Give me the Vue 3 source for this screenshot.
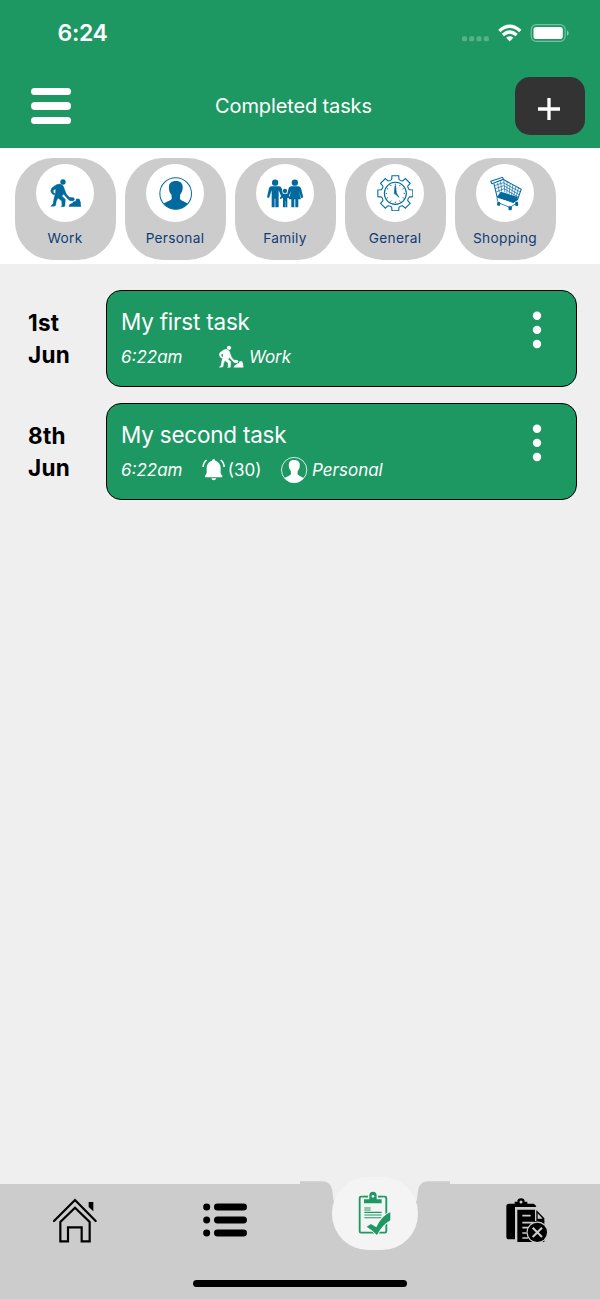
<script setup>
import { h } from 'vue'

const rad = (deg) => ((deg - 90) * Math.PI) / 180
const at = (r, deg) => `${(512 + r * Math.cos(rad(deg))).toFixed(1)} ${(135 + r * Math.sin(rad(deg))).toFixed(1)}`
const gear =
  Array.from({ length: 8 }, (_, k) => {
    const a = k * 45
    return `${k ? 'L' : 'M'}${at(43, a - 15)}L${at(47, a - 13)}L${at(53.5, a - 11)}L${at(53.5, a + 11)}L${at(47, a + 13)}L${at(43, a + 15)}Q${at(40, a + 22.5)} ${at(43, a + 30)}`
  }).join('') + 'Z'
const ticks = Array.from({ length: 12 }, (_, k) => `M${at(25, k * 30)}L${at(29, k * 30)}`).join('')

const icons = {
  work: {
    box: '145 85 105 105',
    body: [
      h('circle', { cx: 190, cy: 103, r: 8 }),
      h('path', { d: 'M156 121L170 111Q180 106 188 112Q193 117 195 126L200 139L209 149L222 150L225 155L220 160L211 159L204 153L191 139L187 146L197 155L196 173L194 177L184 177L187 173L186 160L175 151L170 161L168 173L164 176L153 176L160 169L163 152L167 138L168 124L161 128L161 134L167 139L164 142L157 138L153 130Z', stroke: 'currentColor', 'stroke-width': 1 }),
      h('path', { d: 'M207 177L210 170L219 165L222 161L227 161L230 153L239 153L243 164L244 177Z' })
    ]
  },
  personal: {
    box: '474 83 104 104',
    body: [
      h('circle', { cx: 526.5, cy: 135, r: 47, fill: 'none', stroke: 'currentColor', 'stroke-width': 3 }),
      h('path', { d: 'M527 98C544 98 549 109 547 120C548 129 542 134 540 139L539 149C541 157 553 158 562 165A46 46 0 0 1 491 165C500 158 513 157 515 149L514 139C511 134 506 129 507 120C505 108 511 98 527 98Z' })
    ]
  },
  family: {
    box: '125 83 115 105',
    body: [
      h('circle', { cx: 152.5, cy: 103, r: 9.5 }),
      h('circle', { cx: 211.5, cy: 103, r: 9.5 }),
      h('circle', { cx: 182, cy: 128, r: 6.5 }),
      h('path', { d: 'M141 114H164Q170 114 172 120L178 146L173 150L163 126V177H153V151H151V177H142V126L134 149L128 147L134 120Q136 114 141 114Z' }),
      h('path', { d: 'M201 114H222Q228 114 230 120L237 147L231 150L224 128L230 153H222V177H213V153H210V177H201V153H194L200 128L191 150L186 147L193 120Q195 114 201 114Z' }),
      h('path', { d: 'M177 136H188Q192 137 194 142L199 149L196 153L189 146V177H183V159H182V177H176V146L169 153L166 150L171 142Q173 137 177 136Z' })
    ]
  },
  general: {
    box: '457 80 110 110',
    body: [
      h('path', { d: gear, fill: 'none', stroke: 'currentColor', 'stroke-width': 3.2 }),
      h('circle', { cx: 512, cy: 135, r: 33, fill: 'none', stroke: 'currentColor', 'stroke-width': 3.2 }),
      h('path', { d: ticks, stroke: 'currentColor', 'stroke-width': 2.8 }),
      h('path', { d: 'M511 112L509 135A3.5 3.5 0 0 0 513 138L523 147L515 134L513 112Z', stroke: 'currentColor', 'stroke-width': 1.8 })
    ]
  },
  shopping: {
    box: '266 80 102 110',
    body: [
      h('path', { d: 'M273 99L308 87L311 93L276 106Z', fill: 'none', stroke: 'currentColor', 'stroke-width': 3.2 }),
      h('path', { d: 'M282 105L292 146L340 161L353 154L364 123L312 94', fill: 'none', stroke: 'currentColor', 'stroke-width': 3.2 }),
      h('path', { d: 'M284 112L310 103L361 131M286 121L312 112L358 139M289 131L313 121L356 147M293 103L299 133M302 99L306 130M312 96L315 132M322 100L321 134M331 105L328 138M339 110L335 142M348 115L341 146M356 119L348 148', fill: 'none', stroke: 'currentColor', 'stroke-width': 2 }),
      h('path', { d: 'M291 146L303 130L353 146L354 154L340 164Z' }),
      h('path', { d: 'M291 148L295 163L330 177L352 164', fill: 'none', stroke: 'currentColor', 'stroke-width': 2.4 }),
      h('rect', { x: 292, y: 161, width: 9, height: 11, rx: 3 }),
      h('rect', { x: 326, y: 174, width: 10, height: 12, rx: 3 }),
      h('rect', { x: 346, y: 160, width: 9, height: 13, rx: 3 })
    ]
  },
  bell: {
    box: '305 190 70 70',
    body: [
      h('path', { d: 'M340 194A4.5 4.500 0 0 1 345 198C355 201 361 209 361 220V234Q361 239 366 243V248H314V243Q319 239 319 234V220C319 209 325 201 335 198A4.500 4.500 0 0 1 340 194Z' }),
      h('path', { d: 'M333 251H348Q346 257 340 257Q335 257 333 251Z' }),
      h('path', { d: 'M308.500 217Q309 203 319 196.500M371.500 217Q371 203 361 196.500', fill: 'none', stroke: 'currentColor', 'stroke-width': 4.500 })
    ]
  }
}

const Icon = (props) =>
  h('svg', { viewBox: icons[props.name].box, fill: 'currentColor', 'aria-hidden': 'true' }, icons[props.name].body)
Icon.props = ['name']

const categories = [
  { icon: 'work', label: 'Work' },
  { icon: 'personal', label: 'Personal' },
  { icon: 'family', label: 'Family' },
  { icon: 'general', label: 'General' },
  { icon: 'shopping', label: 'Shopping' }
]

const tasks = [
  { day: '1st', month: 'Jun', title: 'My first task', time: '6:22am', icon: 'work', category: 'Work' },
  { day: '8th', month: 'Jun', title: 'My second task', time: '6:22am', reminder: '(30)', icon: 'personal', category: 'Personal' }
]
</script>

<template>
  <div class="screen">
    <header class="header">
      <div class="status">
        <span class="clock">6:24</span>
        <svg class="indicators" viewBox="0 0 108 20">
          <g fill="#fff" fill-opacity=".25">
            <rect x="1" y="12.3" width="5" height="5" rx="1.5" />
            <rect x="8.2" y="12.3" width="5" height="5" rx="1.5" />
            <rect x="15.5" y="12.3" width="5" height="5" rx="1.5" />
            <rect x="22.8" y="12.3" width="5" height="5" rx="1.5" />
          </g>
          <g fill="none" stroke="#fff" stroke-width="3.3">
            <path d="M38.3 6.9Q48.7-2.4 59.3 6.9" />
            <path d="M41.9 11Q48.7 5 55.6 11" />
          </g>
          <path d="M45.2 13.7Q48.7 11 52.300 13.7L48.7 17.6Z" fill="#fff" />
          <rect x="70.2" y=".7" width="34" height="16.6" rx="5" fill="none" stroke="#fff" stroke-opacity=".4" stroke-width="1.2" />
          <rect x="72.5" y="3" width="29.300" height="12" rx="2.8" fill="#fff" />
          <path d="M106 6.2Q109.500 9 106 12Z" fill="#fff" fill-opacity=".5" />
        </svg>
      </div>
      <div class="toolbar">
        <button class="menu" aria-label="Menu"><i></i><i></i><i></i></button>
        <h1>Completed tasks</h1>
        <button class="add" aria-label="Add">
          <svg viewBox="0 0 22 22"><path d="M11 0V22M0 11H22" stroke="#fff" stroke-width="3.300" /></svg>
        </button>
      </div>
    </header>

    <nav class="categories">
      <div v-for="c in categories" :key="c.label" class="category">
        <span class="disc"><Icon :name="c.icon" :class="['glyph', c.icon]" /></span>
        <span class="label">{{ c.label }}</span>
      </div>
    </nav>

    <main class="tasks">
      <section v-for="t in tasks" :key="t.title" class="row">
        <div class="date">{{ t.day }}<br />{{ t.month }}</div>
        <article class="card">
          <div class="info">
            <h2>{{ t.title }}</h2>
            <div class="meta">
              <em class="time">{{ t.time }}</em>
              <span v-if="t.reminder" class="reminder"><Icon name="bell" class="bell" />{{ t.reminder }}</span>
              <span class="kind" :class="t.icon"><Icon :name="t.icon" class="small" /><em>{{ t.category }}</em></span>
            </div>
          </div>
          <svg class="more" viewBox="0 0 10 38" fill="#fff">
            <circle cx="5" cy="4.800" r="4.200" />
            <circle cx="5" cy="18.900" r="4.200" />
            <circle cx="5" cy="33" r="4.200" />
          </svg>
        </article>
      </section>
    </main>

    <footer class="tabs">
      <a class="tab">
        <svg class="home" viewBox="160 84 132 134" fill="none" stroke="#000" stroke-width="6.5" stroke-linecap="round">
          <path d="M163 153L226 90L288 153" />
          <path d="M182 214V156L226 113L270 156V214H246V172H205V214Z" stroke-linecap="butt" />
          <path d="M267 96H281V124L267 111Z" fill="#000" stroke="none" />
        </svg>
      </a>
      <a class="tab">
        <svg class="list" viewBox="609 100 133 102">
          <circle cx="620" cy="112" r="10.5" /><rect x="642" y="101.500" width="99" height="21" rx="10.500" />
          <circle cx="620" cy="151" r="10.5" /><rect x="642" y="140.500" width="99" height="21" rx="10.500" />
          <circle cx="620" cy="190" r="10.5" /><rect x="642" y="179.500" width="99" height="21" rx="10.500" />
        </svg>
      </a>
      <a class="tab active">
        <svg class="notch" viewBox="30 33 450 69">
          <path d="M100 33H410V69L380 93H131L100 69Z" fill="#efefef" />
          <path d="M30 34H94C113 34 123 44 126 58L131 93L110 102H30ZM480 34H417C398 34 388 44 385 58L380 93L400 102H480Z" fill="#ccc" />
        </svg>
        <span class="bubble">
          <svg class="done" viewBox="204 62 100 134">
            <rect x="209" y="79" width="80" height="108" rx="4" fill="none" stroke="#1e9862" stroke-width="5.500" />
            <path d="M217 75H281V102H217Z" fill="#f4f4f4" />
            <path d="M222 87H238V76A11 12 0 0 1 260 76V87H275V99H222Z" fill="#1e9862" />
            <path d="M217 79H234M264 79H281" stroke="#1e9862" stroke-width="5" />
            <circle cx="249" cy="78" r="4" fill="#f4f4f4" />
            <path d="M223 113H242M223 119H242M223 126H275M223 134H275M223 142H275" stroke="#1e9862" stroke-width="3.200" />
            <path d="M230 169L243 161L259 171Q276 135 301 126V150Q275 165 261 194Q248 179 230 169Z" fill="#1e9862" stroke="#f4f4f4" stroke-width="6" paint-order="stroke" />
          </svg>
        </span>
      </a>
      <a class="tab">
        <svg class="overdue" viewBox="647 84 126 134">
          <path d="M673 101V95H681A11 10 0 0 1 703 95H711V101H730Q736 103 738 111H674V208H656Q648 208 648 200V109Q648 101 656 101Z" />
          <circle cx="692" cy="96" r="4.500" fill="#ccc" />
          <path d="M681 119H734V153H762V216H681Z" />
          <path d="M738 120L762 145V155H738ZM742 130V146H757Z" fill-rule="evenodd" />
          <path d="M696 137H721M696 158H730M696 173H713M696 189H709M696 204H713" stroke="#ccc" stroke-width="5" />
          <circle cx="741" cy="187" r="29" stroke="#ccc" stroke-width="7" paint-order="stroke" />
          <path d="M727 173L755 201M755 173L727 201" stroke="#ccc" stroke-width="6" />
        </svg>
      </a>
      <div class="indicator"></div>
    </footer>
  </div>
</template>

<style>
body {
  margin: 0;
}
</style>

<style scoped>
.screen {
  display: flex;
  flex-direction: column;
  width: 600px;
  height: 1299px;
  overflow: hidden;
  background: #efefef;
  font-family: Inter, "Liberation Sans", sans-serif;
}
svg {
  display: block;
  flex: none;
}
button {
  border: 0;
  padding: 0;
  background: none;
}
.header {
  box-sizing: border-box;
  height: 148px;
  color: #fff;
  background: #1e9862;
}
.status {
  display: flex;
  align-items: center;
  justify-content: space-between;
  height: 66px;
  padding: 0 31px 0 57.500px;
}
.clock {
  font-size: 23px;
  font-weight: 600;
  letter-spacing: -0.3px;
}
.indicators {
  width: 108px;
  height: 20px;
  margin-top: 2px;
}
.toolbar {
  display: grid;
  grid-template-columns: 72px 1fr 85px;
  align-items: center;
  height: 58px;
  margin-top: 11px;
  padding: 0 15px 0 15px;
}
.menu {
  display: flex;
  flex-direction: column;
  gap: 7px;
  width: 40px;
  margin-left: 16px;
}
.menu i {
  height: 7.5px;
  border-radius: 4px;
  background: #fff;
}
h1 {
  margin: 0;
  font-size: 20px;
  font-weight: 400;
  letter-spacing: -0.130px;
  text-align: center;
}
.add {
  display: flex;
  align-items: center;
  justify-content: center;
  justify-self: end;
  width: 70px;
  height: 58px;
  padding: 6px 2px 0 0;
  border-radius: 15px;
  background: #333;
}
.add svg {
  width: 22px;
  height: 22px;
}
.categories {
  display: flex;
  gap: 9px;
  box-sizing: border-box;
  height: 116px;
  padding: 10px 15px;
  background: #fff;
}
.category {
  display: flex;
  flex-direction: column;
  align-items: center;
  box-sizing: border-box;
  width: 101px;
  height: 101.5px;
  padding: 6px 1px 0 0;
  border-radius: 38px;
  background: #ccc;
}
.disc {
  display: flex;
  align-items: center;
  justify-content: center;
  width: 58px;
  height: 58px;
  border-radius: 50%;
  color: #00699e;
  background: #fff;
}
.glyph {
  width: 35px;
  height: 35px;
}
.glyph.family {
  width: 38.300px;
}
.glyph.general {
  width: 36.700px;
  height: 36.700px;
}
.glyph.shopping {
  height: 36.700px;
}
.label {
  margin-top: 7.500px;
  font-size: 13.700px;
  line-height: 17px;
  letter-spacing: 0.300px;
  color: #103c74;
}
.tasks {
  display: flex;
  flex: 1;
  flex-direction: column;
  gap: 16px;
  padding: 26px 23px 0 28px;
}
.row {
  display: flex;
  height: 97px;
}
.date {
  width: 78px;
  padding-top: 17px;
  font-size: 22.500px;
  font-weight: 700;
  letter-spacing: 0.250px;
  line-height: 32px;
}
.card {
  display: flex;
  flex: 1;
  justify-content: space-between;
  box-sizing: border-box;
  border: 1.5px solid #000;
  border-radius: 15px;
  color: #fff;
  background: #1e9862;
}
.info {
  padding: 17px 0 0 14px;
}
h2 {
  margin: 0;
  font-size: 22.500px;
  font-weight: 400;
  letter-spacing: -0.220px;
  line-height: 28px;
}
.meta {
  display: flex;
  align-items: center;
  height: 28px;
  margin-top: 7px;
  font-size: 17px;
}
.time {
  width: 81px;
}
.reminder {
  display: flex;
  align-items: center;
  gap: 2.500px;
  width: 78px;
}
.bell {
  width: 23.300px;
  height: 23.300px;
}
.kind {
  display: flex;
  align-items: center;
  gap: 4px;
}
.kind.work {
  margin-left: 15px;
}
.small {
  width: 28px;
  height: 28px;
}
.more {
  width: 10px;
  height: 38px;
  margin: 20px 34px 0 0;
}
.tabs {
  position: relative;
  display: grid;
  grid-template-columns: repeat(4, 150px);
  height: 115px;
  background: #ccc;
}
.tab {
  display: flex;
  justify-content: center;
  height: 74px;
  padding-top: 14px;
}
.home {
  width: 44px;
  height: 44.700px;
}
.list {
  width: 44.300px;
  height: 34px;
  margin-top: 5px;
}
.overdue {
  width: 42px;
  height: 44.700px;
  margin-left: 3px;
}
.active {
  position: relative;
  padding-top: 0;
}
.notch {
  position: absolute;
  top: -3px;
  left: 0;
  width: 150px;
  height: 23px;
}
.bubble {
  position: absolute;
  top: -7px;
  left: 31.500px;
  display: flex;
  justify-content: center;
  box-sizing: border-box;
  width: 86.500px;
  height: 72.500px;
  padding-top: 13.500px;
  border-radius: 36px;
  background: #f4f4f4;
}
.done {
  width: 33.300px;
  height: 44.700px;
}
.indicator {
  position: absolute;
  bottom: 12px;
  left: 193px;
  width: 214px;
  height: 7px;
  border-radius: 4px;
  background: #000;
}
</style>
